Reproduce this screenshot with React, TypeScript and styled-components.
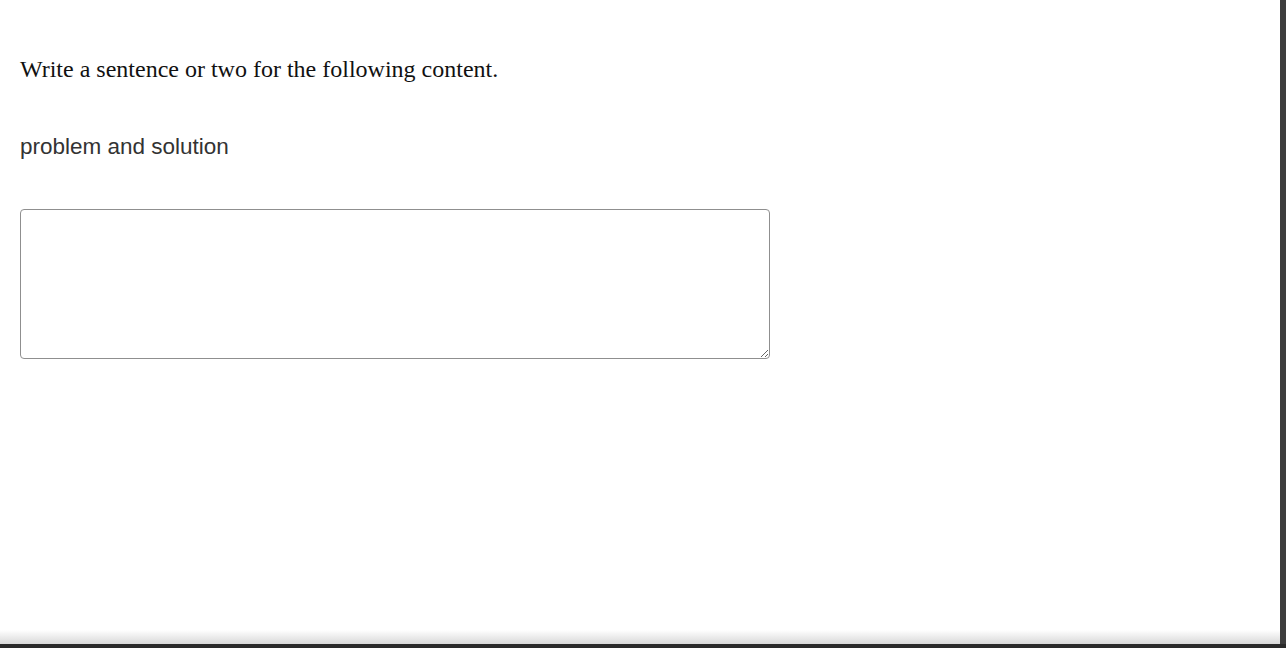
import styled, { createGlobalStyle } from "styled-components"

const GlobalStyle = createGlobalStyle`
  html, body {
    margin: 0;
    padding: 0;
    background: #2a2a2a;
    overflow: hidden;
  }
`

const Frame = styled.div`
  display: flex;
  flex-flow: row;
  width: 1286px;
  height: 648px;
  background: #2a2a2a;
`

const Page = styled.main`
  width: 1280px;
  height: 644px;
  box-sizing: border-box;
  padding: 56px 20px 0;
  background: linear-gradient(to bottom, #fff 0, #fff 630px, #d8d8d8 644px);
  display: flex;
  flex-flow: column;
`

const SideEdge = styled.div`
  width: 6px;
  height: 644px;
  background: #3d3d3d;
`

const Prompt = styled.p`
  margin: 0;
  font-family: "Liberation Serif", "Times New Roman", serif;
  font-size: 24px;
  line-height: 26px;
  color: #111;
`

const Topic = styled.p`
  margin: 52px 0 0;
  font-family: "Liberation Sans", Arial, sans-serif;
  font-size: 22.5px;
  line-height: 26px;
  color: #333;
`

const Answer = styled.textarea`
  margin-top: 49px;
  width: 750px;
  height: 150px;
  box-sizing: border-box;
  border: 1px solid #8f8f8f;
  border-radius: 4px;
  font-family: "Liberation Sans", Arial, sans-serif;
  font-size: 16px;
  padding: 4px;
  resize: both;
`

function App() {
  return (
    <>
      <GlobalStyle />
      <Frame>
        <Page>
          <Prompt>Write a sentence or two for the following content.</Prompt>
          <Topic>problem and solution</Topic>
          <Answer />
        </Page>
        <SideEdge />
      </Frame>
    </>
  )
}

export default App
